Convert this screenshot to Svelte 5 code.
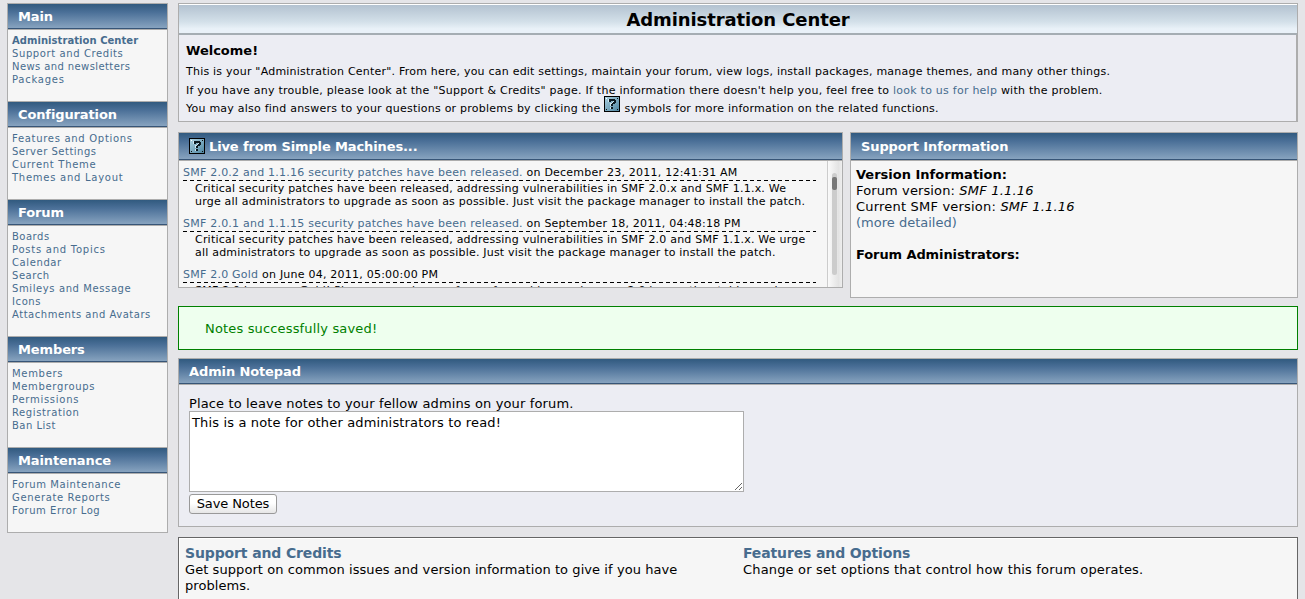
<script>
  // Each menu entry is [label, tracking in px].
  const menu = [
    { title: 'Main', items: [['Administration Center', 0.05], ['Support and Credits', 0.6], ['News and newsletters', 0.4], ['Packages', 0.75]] },
    { title: 'Configuration', items: [['Features and Options', 0.7], ['Server Settings', 0.5], ['Current Theme', 0.7], ['Themes and Layout', 0.74]] },
    { title: 'Forum', items: [['Boards', 0.5], ['Posts and Topics', 0.75], ['Calendar', 0.6], ['Search', 0.55], ['Smileys and Message Icons', 0.6], ['Attachments and Avatars', 0.53]] },
    { title: 'Members', items: [['Members', 0.7], ['Membergroups', 0.67], ['Permissions', 0.73], ['Registration', 0.6], ['Ban List', 0.5]] },
    { title: 'Maintenance', items: [['Forum Maintenance', 0.57], ['Generate Reports', 0.63], ['Forum Error Log', 0.53]] }
  ];
  const news = [
    { link: 'SMF 2.0.2 and 1.1.16 security patches have been released.', date: 'on December 23, 2011, 12:41:31 AM',
      lines: ['Critical security patches have been released, addressing vulnerabilities in SMF 2.0.x and SMF 1.1.x. We', 'urge all administrators to upgrade as soon as possible. Just visit the package manager to install the patch.'] },
    { link: 'SMF 2.0.1 and 1.1.15 security patches have been released.', date: 'on September 18, 2011, 04:48:18 PM',
      lines: ['Critical security patches have been released, addressing vulnerabilities in SMF 2.0 and SMF 1.1.x. We urge', 'all administrators to upgrade as soon as possible. Just visit the package manager to install the patch.'] },
    { link: 'SMF 2.0 Gold', date: 'on June 04, 2011, 05:00:00 PM',
      lines: ['SMF 2.0 has gone Gold! Please upgrade your forum from older versions, as 2.0 is now the stable version'] }
  ];
</script>

{#snippet help()}
  <svg class="help" width="16" height="16" viewBox="0 0 16 16" shape-rendering="crispEdges">
    <defs>
      <linearGradient id="tile" x1="0" y1="0" x2="1" y2="1">
        <stop offset="0" stop-color="#a9cfdf" />
        <stop offset="1" stop-color="#4f86a2" />
      </linearGradient>
    </defs>
    <rect width="16" height="16" fill="#000" />
    <rect x="1" y="1" width="14" height="14" fill="url(#tile)" />
    <path d="M4 3H10V4H11V7H10V8H8V10H6V7H8V6H9V5H6V6H4ZM6 11H8V13H6Z" fill="#cfe6f0" />
    <path d="M5 3H11V4H12V7H11V8H9V10H7V8H8V7H9V6H10V5H7V6H5ZM7 11H9V13H7Z" fill="#0c1a22" />
    <path d="M2 2h1v1h-1z" fill="#fff" />
    <path d="M13 2h1v1h-1zM2 13h1v1h-1zM13 13h1v1h-1z" fill="#111" />
  </svg>
{/snippet}

<div class="page">
  <nav class="side">
    {#each menu as group, g}
      <h3 class="bar">{group.title}</h3>
      <div class="links">
        {#each group.items as [label, tracking], i}
          <a class:current={g === 0 && i === 0} style:letter-spacing="{tracking}px">{label}</a>
        {/each}
      </div>
    {/each}
  </nav>

  <main>
    <section class="welcome">
      <h1>Administration Center</h1>
      <div class="intro">
        <b>Welcome!</b>
        <p class="i1">This is your "Administration Center". From here, you can edit settings, maintain your forum, view logs, install packages, manage themes, and many other things.</p>
        <p class="i2">If you have any trouble, please look at the "Support &amp; Credits" page. If the information there doesn't help you, feel free to <a>look to us for help</a> with the problem.</p>
        <p class="i3">You may also find answers to your questions or problems by clicking the {@render help()} symbols for more information on the related functions.</p>
      </div>
    </section>

    <div class="pair">
      <section class="live">
        <h3 class="bar tall">{@render help()}<span>Live from Simple Machines...</span></h3>
        <div class="feed">
          <div class="stories">
            {#each news as n}
              <div class="story">
                <div class="head"><a>{n.link}</a> {n.date}</div>
                <div class="text">
                  {#each n.lines as line}<div>{line}</div>{/each}
                </div>
              </div>
            {/each}
          </div>
          <div class="scroll"><div class="track"><div class="thumb"></div></div></div>
        </div>
      </section>
      <section class="support">
        <h3 class="bar tall">Support Information</h3>
        <div class="version">
          <b>Version Information:</b>
          <span class="v1">Forum version: <i>SMF 1.1.16</i></span>
          <span class="v2">Current SMF version: <i>SMF 1.1.16</i></span>
          <a>(more detailed)</a>
          <b class="admins">Forum Administrators:</b>
        </div>
      </section>
    </div>

    <div class="saved">Notes successfully saved!</div>

    <section class="notepad">
      <h3 class="bar">Admin Notepad</h3>
      <div class="pad">
        <label for="notes">Place to leave notes to your fellow admins on your forum.</label>
        <textarea id="notes">This is a note for other administrators to read!</textarea>
        <button>Save Notes</button>
      </div>
    </section>

    <section class="options">
      <div>
        <a>Support and Credits</a>
        <p class="o1">Get support on common issues and version information to give if you have<br />problems.</p>
      </div>
      <div>
        <a>Features and Options</a>
        <p class="o2">Change or set options that control how this forum operates.</p>
      </div>
    </section>
  </main>
</div>

<style>
  :global(body) { background: #e5e5e8; overflow: hidden; }
  .page, .page :global(*) { box-sizing: border-box; }
  .page {
    display: flex; align-items: flex-start; gap: 10px;
    width: 1305px; height: 599px; padding: 3px 7px 0; overflow: hidden;
    font-family: Verdana, "DejaVu Sans", sans-serif; font-size: 13px; line-height: 16px; color: #000;
  }
  h1, h3, p { margin: 0; }
  a { color: #476c8e; }
  .bar {
    height: 27px; padding-left: 10px; font-size: 13px; line-height: 26px; color: #fff; white-space: nowrap; letter-spacing: -0.12px;
    background: linear-gradient(#315a7f 0, #4a6f97 8px, #87a3bf 24px, #375577 24px, #375577 25px, #adadad 25px);
    border-top: 1px solid #adadad;
  }
  .bar.tall {
    display: flex; gap: 4px; height: 29px; line-height: 27px;
    background: linear-gradient(#315a7f 0, #4a6f97 8px, #87a3bf 26px, #375577 26px, #375577 27px, #adadad 27px);
  }
  .bar .help { margin-top: 5px; }
  .side { width: 161px; background: #f6f6f6; border: solid #adadad; border-width: 0 1px 1px; }
  .links { display: flex; flex-direction: column; padding: 4px 4px 15px; font-size: 10px; line-height: 13px; }
  .links a { max-width: 142px; }
  .current { font-weight: bold; }
  main { width: 1120px; }
  .welcome { height: 119px; border: 1px solid #adadad; background: #ecedf3; }
  h1 {
    height: 31px; border-top: 1px solid #fff; border-bottom: 2px solid #a5adb3; text-align: center; letter-spacing: -0.1px;
    font-size: 18px; line-height: 29px; background: linear-gradient(#b3c2d0, #d3e0e9 60%, #e9f1f8 85%);
  }
  .intro { height: 86px; padding: 7px 7px 0; border-right: 1px solid #adadad; font-size: 11px; white-space: nowrap; letter-spacing: 0.225px; }
  .intro b { display: block; font-size: 13px; height: 20px; line-height: 17px; letter-spacing: 0; }
  .intro p { height: 19px; line-height: 19px; }
  .intro .i1 { letter-spacing: 0.22px; }
  .intro .i2 { letter-spacing: 0.242px; }
  .intro .i3 { height: 18px; line-height: 18px; display: flex; gap: 4px; letter-spacing: 0.23px; }
  .intro .i3 .help { margin-top: -4px; }
  .help { flex: none; display: block; }
  .pair { display: flex; align-items: flex-start; gap: 7px; margin-top: 10px; }
  .live, .support { border: solid #adadad; border-width: 0 1px 1px; background: #f6f6f6; }
  .live { width: 665px; height: 156px; }
  .support { width: 448px; height: 166px; }
  .feed { display: flex; justify-content: space-between; height: 126px; overflow: hidden; }
  .stories { width: 633px; margin-left: 4px; padding-top: 4px; font-size: 11px; line-height: 13px; white-space: nowrap; letter-spacing: 0.21px; }
  .story { height: 51px; }
  .head { height: 15px; line-height: 15px; letter-spacing: 0.225px; }
  .text { height: 36px; padding: 2px 0 0 12px; background: repeating-linear-gradient(90deg, #000 0 4px, transparent 4px 7px) 0 0 / 100% 1px no-repeat; }
  .scroll { width: 15px; padding: 12px 0 10px 4px; border-left: 1px solid #ccc; background: linear-gradient(90deg, #fafafa, #e3e3e3 75%, #eee); }
  .track { width: 5px; height: 102px; border-radius: 3px; background: #ccc; padding-top: 4px; }
  .thumb { height: 13px; border-radius: 2px; background: #777; }
  .version { display: flex; flex-direction: column; padding: 6px 5px; }
  .version i { letter-spacing: 0.2px; }
  .v1 { letter-spacing: 0.12px; }
  .v2 { letter-spacing: 0.2px; }
  .admins { margin-top: 16px; letter-spacing: -0.1px; }
  .saved { height: 44px; margin-top: 8px; padding-left: 26px; border: 1px solid #008000; background: #efe; color: #008000; line-height: 44px; letter-spacing: 0.16px; }
  .notepad { height: 169px; margin-top: 8px; border: solid #adadad; border-width: 0 1px 1px; background: #ecedf3; }
  .pad { display: flex; flex-direction: column; align-items: flex-start; padding: 11px 10px; }
  label { height: 15px; letter-spacing: 0.135px; }
  textarea { display: block; width: 555px; height: 81px; padding: 3px 2px 2px; border: 1px solid #adadad; outline: 0; font: 13px/16px Verdana, "DejaVu Sans", sans-serif; letter-spacing: 0.146px; background: #fff; color: #000; }
  button { height: 20px; width: 88px; margin-top: 2px; padding: 0; border: 1px solid #999; border-radius: 3px; background: linear-gradient(#fff, #fff 45%, #e6e6e6); font: 13px/18px Verdana, "DejaVu Sans", sans-serif; letter-spacing: -0.1px; color: #000; white-space: nowrap; }
  .options { display: grid; grid-template-columns: 558px 1fr; height: 100px; margin-top: 10px; padding: 7px 5px; border: 1px solid #666; background: #f6f6f6; box-shadow: inset 1px 1px #fff; white-space: nowrap; }
  .options div { padding-left: 1px; }
  .options a { display: block; font-size: 14px; font-weight: bold; line-height: 17px; letter-spacing: -0.13px; }
  .o1 { letter-spacing: 0.07px; }
  .o2 { letter-spacing: 0.17px; }
</style>
